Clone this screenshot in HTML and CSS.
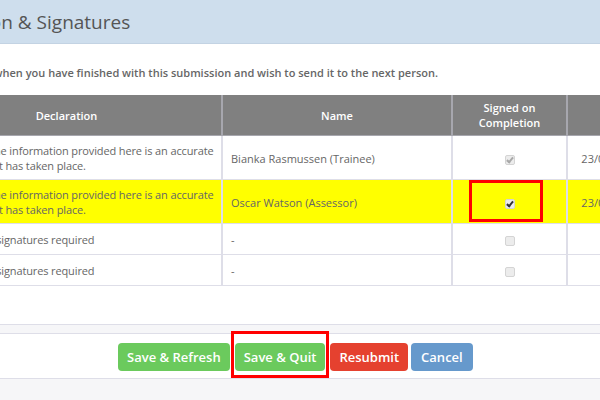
FILE: index.html
```html
<!DOCTYPE html>
<html lang="en">
<head>
    <meta charset="UTF-8">
    <title>Declaration &amp; Signatures</title>
    <link rel="stylesheet" href="styles.css">
</head>
<body>
    <div class="page">
        <div class="panel-heading">
            <h1>Declaration &amp; Signatures</h1>
        </div>
        <div class="panel-body">
            <p class="intro">Tick your box when you have finished with this submission and wish to send it to the next person.</p>
            <table class="sig-table">
                <colgroup>
                    <col class="col-decl">
                    <col class="col-name">
                    <col class="col-signed">
                    <col class="col-date">
                </colgroup>
                <thead>
                    <tr>
                        <th>Declaration</th>
                        <th>Name</th>
                        <th>Signed on<br>Completion</th>
                        <th>Date</th>
                    </tr>
                </thead>
                <tbody>
                    <tr>
                        <td class="decl">I confirm that the information provided here is an accurate<br>record of all that has taken place.</td>
                        <td>Bianka Rasmussen (Trainee)</td>
                        <td class="center"><span class="check checked disabled"></span></td>
                        <td class="center">23/03/2021 10:15</td>
                    </tr>
                    <tr class="current">
                        <td class="decl">I confirm that the information provided here is an accurate<br>record of all that has taken place.</td>
                        <td>Oscar Watson (Assessor)</td>
                        <td class="center marked">
                            <span class="check checked"></span>
                            <span class="mark mark-check"></span>
                        </td>
                        <td class="center">23/03/2021 11:40</td>
                    </tr>
                    <tr class="short">
                        <td class="decl">No other party signatures required</td>
                        <td>-</td>
                        <td class="center"><span class="check disabled"></span></td>
                        <td></td>
                    </tr>
                    <tr class="short">
                        <td class="decl">No other party signatures required</td>
                        <td>-</td>
                        <td class="center"><span class="check disabled"></span></td>
                        <td></td>
                    </tr>
                </tbody>
            </table>
        </div>
        <div class="panel-footer">
            <button class="btn btn-green">Save &amp; Refresh</button>
            <div class="mark-wrap">
                <button class="btn btn-green">Save &amp; Quit</button>
                <span class="mark mark-quit"></span>
            </div>
            <button class="btn btn-red">Resubmit</button>
            <button class="btn btn-blue">Cancel</button>
        </div>
    </div>
</body>
</html>
```
FILE: styles.css
```css
:root {
    --heading-bg: #cedeed;
    --text: #666;
    --head-grey: #808080;
    --line: #dedee8;
    --green: #6bca5d;
    --red: #e5412f;
    --blue: #6699cc;
    --mark: #ff0000;
}
html, body {
    margin: 0;
    padding: 0;
}
body {
    font-family: "Open Sans", "Liberation Sans", sans-serif;
    color: var(--text);
    background-color: #f6f6f8;
    width: 600px;
    height: 400px;
    overflow: hidden;
}
.page {
    margin-left: -103px;
    width: 900px;
}
.panel-heading {
    background-color: var(--heading-bg);
    height: 44px;
    border-bottom: 1px solid #c3d3e3;
    box-sizing: border-box;
    padding-left: 14px;
}
.panel-heading h1 {
    margin: 0;
    font-size: 19px;
    font-weight: 400;
    line-height: 44px;
    color: #555;
}
.panel-body {
    background-color: #fff;
    padding: 21px 15px 38px;
    border-bottom: 1px solid var(--line);
}
.intro {
    margin: 0 0 14px;
    font-size: 11px;
    font-weight: 600;
    line-height: 16px;
    color: #666;
    padding-left: 8px;
}
.sig-table {
    border-collapse: collapse;
    font-size: 11px;
    line-height: 15px;
    table-layout: fixed;
    width: 773px;
}
.col-decl { width: 310px; }
.col-name { width: 230px; }
.col-signed { width: 115px; }
.col-date { width: 118px; }
.sig-table th {
    background-color: var(--head-grey);
    color: #fff;
    font-weight: 600;
    padding: 5px 8px;
    height: 29px;
    border-right: 2px solid #a7a7ae;
    border-bottom: 1px solid #a7a7ae;
}
.sig-table td {
    padding: 7px 8px 6px;
    border-right: 2px solid var(--line);
    border-bottom: 1px solid var(--line);
    vertical-align: middle;
}
.sig-table .short td {
    padding-top: 8px;
    padding-bottom: 7px;
}
.decl {
    white-space: nowrap;
    letter-spacing: -0.13px;
}
.center {
    text-align: center;
}
.current td {
    background-color: #ffff00;
}
.check {
    display: inline-block;
    width: 8px;
    height: 8px;
    border: 1px solid #d4d4d4;
    border-radius: 2px;
    background-color: #ececec;
    vertical-align: middle;
    position: relative;
}
.check.checked::after {
    content: "";
    position: absolute;
    left: 2px;
    top: 0;
    width: 2px;
    height: 5px;
    border: solid #333;
    border-width: 0 2px 2px 0;
    transform: rotate(40deg);
}
.check.checked.disabled::after {
    border-color: #a8a8a8;
}
.marked {
    position: relative;
}
.mark-wrap {
    position: relative;
    display: inline-flex;
}
.mark {
    position: absolute;
    border: 3px solid var(--mark);
    pointer-events: none;
}
.mark-check {
    left: 16px;
    right: 23px;
    top: 0;
    bottom: 1px;
}
.mark-quit {
    left: -4px;
    right: -4px;
    top: -12px;
    bottom: -7px;
}
.panel-footer {
    margin-top: 8px;
    background-color: #fff;
    border-top: 1px solid var(--line);
    border-bottom: 1px solid var(--line);
    padding: 9px 0 7px 221px;
    display: flex;
    gap: 5px;
}
.btn {
    font-family: inherit;
    font-size: 13px;
    font-weight: 600;
    color: #fff;
    border: none;
    border-radius: 4px;
    height: 28px;
    padding: 0 9px;
    cursor: pointer;
}
.btn-green { background-color: var(--green); }
.btn-red { background-color: var(--red); }
.btn-blue {
    background-color: var(--blue);
    margin-left: -2px;
    padding: 0 10px;
}
```
